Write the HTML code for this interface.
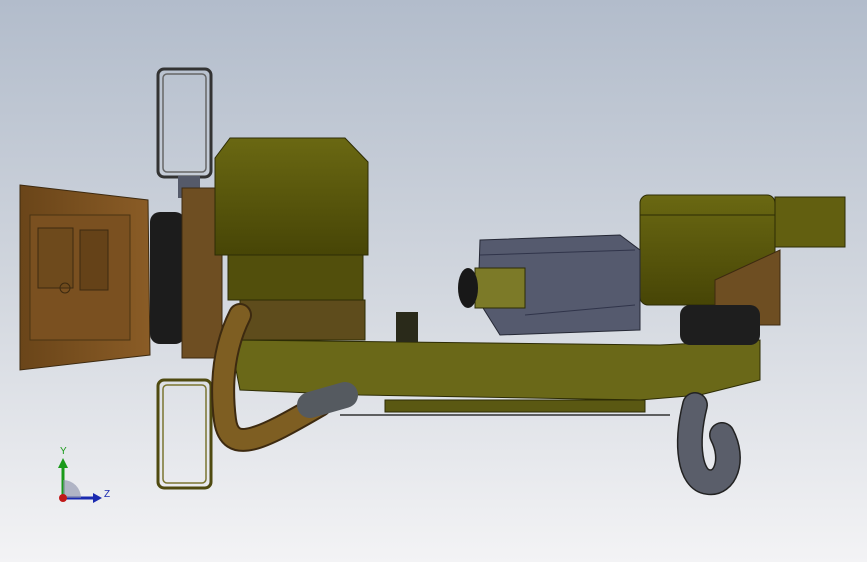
<!DOCTYPE html>
<html><head><meta charset="utf-8"><style>
html,body{margin:0;padding:0;width:867px;height:562px;overflow:hidden}
body{background:linear-gradient(#b2bccb 0%,#d1d6de 50%,#f3f3f5 100%)}
svg{position:absolute;left:0;top:0}
</style></head><body>
<svg width="867" height="562" viewBox="0 0 867 562">
<defs>
<linearGradient id="br" x1="0" x2="1"><stop offset="0" stop-color="#6a4519"/><stop offset="1" stop-color="#8a5c26"/></linearGradient>
<linearGradient id="ol" x1="0" y1="0" x2="0" y2="1"><stop offset="0" stop-color="#6a6812"/><stop offset="1" stop-color="#474506"/></linearGradient>
</defs>
<rect x="158" y="69" width="53" height="108" rx="6" fill="none" stroke="#333" stroke-width="3"/>
<rect x="163" y="74" width="43" height="98" rx="4" fill="none" stroke="#666" stroke-width="1.5"/>
<rect x="178" y="176" width="22" height="22" fill="#555a6a"/>
<rect x="158" y="380" width="53" height="108" rx="6" fill="none" stroke="#4f4a10" stroke-width="3"/>
<rect x="163" y="385" width="43" height="98" rx="4" fill="none" stroke="#7a7530" stroke-width="1.5"/>
<polygon points="20,185 148,200 150,355 20,370" fill="url(#br)" stroke="#3d2a10"/>
<rect x="30" y="215" width="100" height="125" fill="#7a5020" stroke="#4a3312"/>
<rect x="38" y="228" width="35" height="60" fill="#6e4a1c" stroke="#3d2a10"/>
<rect x="80" y="230" width="28" height="60" fill="#654218" stroke="#3d2a10"/>
<circle cx="65" cy="288" r="5" fill="none" stroke="#3d2a10"/>
<rect x="150" y="212" width="35" height="132" rx="10" fill="#1c1c1c"/>
<rect x="182" y="188" width="40" height="170" fill="#6e4e22" stroke="#3d2a10"/>
<path d="M215 158 L230 138 L345 138 L368 162 L368 255 L215 255 Z" fill="url(#ol)" stroke="#2d2c05"/>
<rect x="228" y="255" width="135" height="45" fill="#524f0c" stroke="#2d2c05"/>
<rect x="240" y="300" width="125" height="40" fill="#5e4c1c" stroke="#2d2c05"/>
<polygon points="230,340 660,345 760,340 760,380 700,395 640,400 360,395 240,390" fill="#6a6818" stroke="#2d2c05"/>
<line x1="340" y1="415" x2="670" y2="415" stroke="#333" stroke-width="1.5"/>
<rect x="385" y="400" width="260" height="12" fill="#5a5812" stroke="#2d2c05"/>
<rect x="396" y="312" width="22" height="30" fill="#2a2a1a"/>
<rect x="640" y="195" width="135" height="110" rx="8" fill="url(#ol)" stroke="#2d2c05"/>
<line x1="640" y1="215" x2="775" y2="215" stroke="#2d2c05"/>
<rect x="775" y="197" width="70" height="50" fill="#625f10" stroke="#2d2c05"/>
<polygon points="715,280 780,250 780,325 715,325" fill="#6e4e22" stroke="#3d2a10"/>
<rect x="680" y="305" width="80" height="40" rx="10" fill="#1e1e1e"/>
<polygon points="480,240 620,235 640,250 640,330 500,335 478,300" fill="#555a6e" stroke="#252835"/>
<line x1="480" y1="255" x2="635" y2="250" stroke="#30344a"/>
<line x1="525" y1="315" x2="635" y2="305" stroke="#30344a"/>
<rect x="475" y="268" width="50" height="40" fill="#7c7a28" stroke="#2d2c05"/>
<ellipse cx="468" cy="288" rx="10" ry="20" fill="#181818"/>
<path d="M240 315 C225 345 220 380 225 420 C230 455 260 440 320 405" fill="none" stroke="#3d2a10" stroke-width="24" stroke-linecap="round"/>
<path d="M240 315 C225 345 220 380 225 420 C230 455 260 440 320 405" fill="none" stroke="#7e5e22" stroke-width="20" stroke-linecap="round"/>
<path d="M310 405 L345 395" stroke="#555a60" stroke-width="26" stroke-linecap="round"/>
<path d="M695 405 C685 445 690 480 708 482 C725 485 735 460 722 435" fill="none" stroke="#222" stroke-width="26" stroke-linecap="round"/>
<path d="M695 405 C685 445 690 480 708 482 C725 485 735 460 722 435" fill="none" stroke="#5a5e6a" stroke-width="23" stroke-linecap="round"/>
<line x1="63" y1="498" x2="63" y2="465" stroke="#1a9a1a" stroke-width="3"/>
<polygon points="58,468 63,458 68,468" fill="#1a9a1a"/>
<line x1="63" y1="498" x2="95" y2="498" stroke="#1a2ab0" stroke-width="3"/>
<polygon points="93,493 102,498 93,503" fill="#1a2ab0"/>
<path d="M63 498 L63 480 A18 18 0 0 1 81 498 Z" fill="#8890a8" opacity="0.6"/>
<circle cx="63" cy="498" r="4" fill="#c01818"/>
<text x="60" y="454" font-family="Liberation Sans, sans-serif" font-size="10" fill="#1a9a1a">Y</text>
<text x="104" y="497" font-family="Liberation Sans, sans-serif" font-size="10" fill="#1a2ab0">Z</text>
</svg>
</body></html>
